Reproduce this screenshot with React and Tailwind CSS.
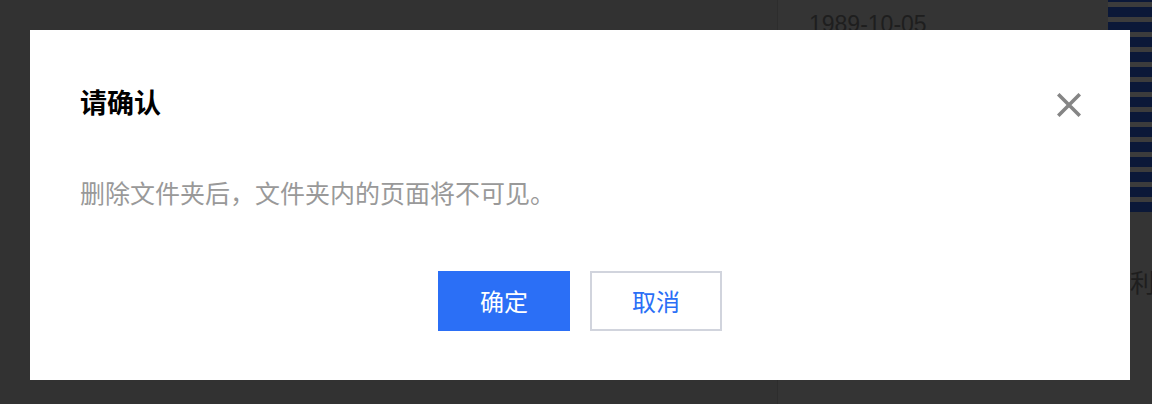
export default function App() {
  const stripes = Array.from({ length: 15 });

  return (
    <div
      className="relative h-[404px] w-full overflow-hidden bg-[#323232] flex"
      style={{ fontFamily: '"Noto Sans CJK SC", "Noto Sans", sans-serif' }}
    >
      {/* page behind the mask */}
      <div className="flex-1" />
      <div className="w-[375px] flex border-l border-[#2d2d2d] bg-[#343434]">
        <div className="flex-1 pl-[31px] pt-[13px]">
          <div
            className="text-[23px] leading-none text-[#1e1e1e]"
            style={{ fontFamily: '"Liberation Sans", Arial, sans-serif' }}
          >
            1989-10-05
          </div>
        </div>
        <div className="w-[44px] flex flex-col">
          <div className="flex flex-col gap-[5px] mt-[-8px] bg-[#3c3c3c]">
            {stripes.map((_, i) => (
              <div key={i} className="h-[10px] bg-[#0b1838]" />
            ))}
          </div>
          <div className="pl-[22px] mt-[57px] text-[25px] leading-none text-[#1e1e1e] whitespace-nowrap">
            利
          </div>
        </div>
      </div>

      {/* dialog */}
      <div className="absolute left-[30px] top-[30px] w-[1100px] h-[350px] bg-white flex flex-col pl-[50px] pr-[49px] pt-[54px]">
        <div className="flex items-start justify-between">
          <h2 className="text-[27px] leading-[36px] font-bold text-black">请确认</h2>
          <button className="w-6 h-6 mt-[9px] flex items-center justify-center">
            <svg width="24" height="24" viewBox="0 0 24 24">
              <path
                d="M2.5 2.5L21.5 21.5M21.5 2.5L2.5 21.5"
                stroke="#858585"
                strokeWidth="3.6"
                strokeLinecap="square"
              />
            </svg>
          </button>
        </div>
        <p className="mt-[54px] text-[25px] leading-[36px] text-[#999999]">
          删除文件夹后，文件夹内的页面将不可见。
        </p>
        <div className="mt-[61px] flex justify-center gap-5 pr-px">
          <button className="w-[132px] h-[60px] bg-[#2b6ff6] text-white text-[24px]">
            确定
          </button>
          <button className="w-[132px] h-[60px] bg-white border-2 border-[#d1d4dd] text-[#2b6ff6] text-[24px]">
            取消
          </button>
        </div>
      </div>
    </div>
  );
}
